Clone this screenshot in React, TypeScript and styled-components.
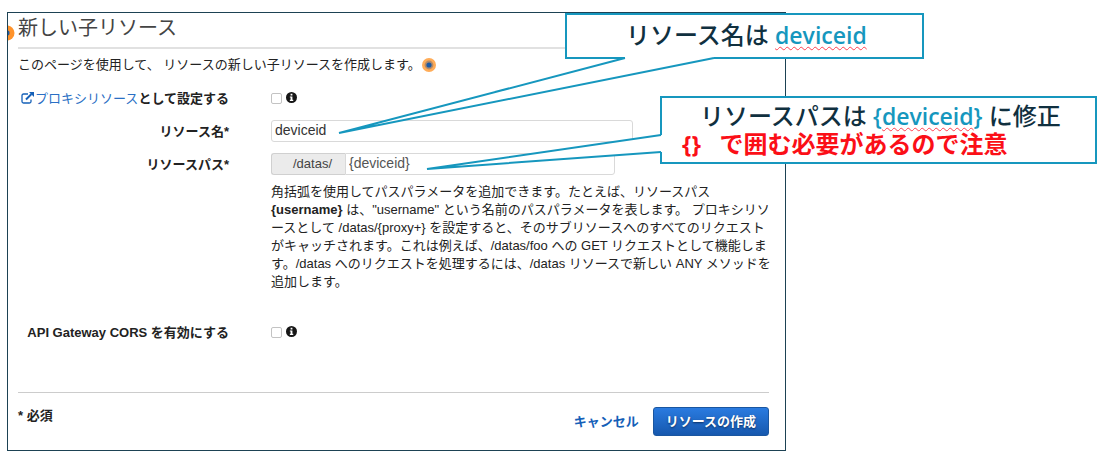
import React from "react";
import styled, { createGlobalStyle } from "styled-components";

const ink = "#222222";
const navy = "#1d4254";
const teal = "#1697be";
const linkBlue = "#1560b8";

const GlobalStyle = createGlobalStyle`
  *, *::before, *::after { box-sizing: border-box; }
  body {
    margin: 0;
    background: #ffffff;
    color: ${ink};
    font: 13px/18px "Liberation Sans", "Noto Sans CJK JP", sans-serif;
  }
`;

const Page = styled.main`
  padding: 12px 8px 12px 7px;
`;

const Stage = styled.div`
  position: relative;
  max-width: 779px;
`;

const Panel = styled.form`
  position: relative;
  overflow: hidden;
  padding: 0 16px 14px 10px;
  border: 1px solid ${navy};
  background: #ffffff;
`;

const Title = styled.h1`
  margin: 0;
  padding: 1px 0 5px;
  border-bottom: 2px solid #e1e1e1;
  font-size: 20px;
  line-height: 28px;
  font-weight: 400;
  color: #444444;
`;

const Lead = styled.p`
  display: flex;
  align-items: center;
  margin: 6px 0 12px;
  line-height: 20px;
`;

const Marker = styled.svg`
  width: 16px;
  height: 16px;
  flex: none;
`;

const EdgeMarker = styled(Marker)`
  position: absolute;
  left: -9px;
  top: 12px;
`;

const Row = styled.div<{ $space?: number }>`
  display: grid;
  grid-template-columns: 211px minmax(0, 1fr);
  column-gap: 42px;
  align-items: center;
  min-height: 22px;
  margin-top: ${(p) => p.$space ?? 0}px;
`;

const Label = styled.label`
  padding-top: 2px;
  text-align: right;
  font-weight: 700;
  white-space: nowrap;
`;

const ProxyLink = styled.a`
  color: #2a6fc4;
  font-weight: 400;
  text-decoration: none;
`;

const LinkIcon = styled.svg`
  width: 14px;
  height: 12px;
  vertical-align: -1px;
`;

const CheckGroup = styled.div`
  display: flex;
  align-items: center;
  gap: 4px;
`;

const Checkbox = styled.input`
  appearance: none;
  width: 11px;
  height: 11px;
  margin: 0;
  border: 1px solid #c3c3c3;
  border-radius: 2px;
  background: #ffffff;
`;

const InfoIcon = styled.svg`
  width: 11px;
  height: 11px;
  margin-bottom: 2px;
`;

const TextInput = styled.input`
  width: 100%;
  max-width: 362px;
  height: 22px;
  padding: 0 3px 2px;
  border: 1px solid #d9d9d9;
  border-radius: 3px;
  background: #ffffff;
  color: #333333;
  font: 14px/20px "Liberation Sans", sans-serif;
`;

const PathGroup = styled.div`
  display: flex;
  max-width: 344px;
`;

const Prefix = styled.span`
  flex: none;
  width: 74px;
  padding-right: 13px;
  border: 1px solid #d0d0d0;
  border-right: 0;
  border-radius: 3px 0 0 3px;
  background: #ebebeb;
  color: #444444;
  line-height: 20px;
  text-align: right;
`;

const PathInput = styled(TextInput)`
  flex: 1;
  min-width: 0;
  border-radius: 0 3px 3px 0;
  color: #555555;
`;

const Help = styled.p`
  margin: 8px 0 0 253px;
  white-space: nowrap;
`;

const Footer = styled.footer`
  display: flex;
  align-items: flex-start;
  margin-top: 49px;
  padding-top: 14px;
  border-top: 1px solid #cccccc;
`;

const Required = styled.strong`
  margin-right: auto;
`;

const Cancel = styled.button`
  height: 29px;
  margin-right: 14px;
  padding: 0;
  border: 0;
  background: none;
  color: ${linkBlue};
  font: 700 13px/27px "Liberation Sans", "Noto Sans CJK JP", sans-serif;
`;

const Submit = styled.button`
  height: 29px;
  padding: 0 12px;
  border: 1px solid #1a56a0;
  border-radius: 3px;
  background: linear-gradient(#2a7be0, #1658ae);
  color: #ffffff;
  font: 700 13px/27px "Liberation Sans", "Noto Sans CJK JP", sans-serif;
  text-shadow: 0 1px 2px #0b2f62;
`;

const Callout = styled.aside<{ $x: number; $y: number; $w: number; $h: number }>`
  position: absolute;
  left: ${(p) => p.$x}px;
  top: ${(p) => p.$y}px;
  width: ${(p) => p.$w}px;
  height: ${(p) => p.$h}px;
  border: 2px solid ${teal};
  background: #ffffff;
  color: #10303f;
  font: 500 24px/28px "Open Sans", "Noto Sans CJK JP", sans-serif;
  white-space: pre;
`;

const NoteLine = styled.p<{ $indent: number; $warn?: boolean }>`
  margin: 0;
  padding-left: ${(p) => p.$indent}px;
  color: ${(p) => (p.$warn ? "#fb0f17" : "inherit")};
  font-weight: ${(p) => (p.$warn ? 700 : 500)};
`;

const NameNote = styled(NoteLine)`
  padding-top: 6px;
`;

const PathNote = styled(NoteLine)`
  padding-top: 4px;
`;

const Term = styled.span`
  color: ${teal};
  font-size: 23px;
  font-weight: 600;
`;

const Misspelt = styled.span`
  text-decoration: underline wavy #ff4050 1px;
  text-decoration-skip-ink: none;
  text-underline-offset: 2px;
`;

const Tail = styled.svg`
  position: absolute;
  left: 0;
  top: 0;
  width: 779px;
  height: 439px;
  pointer-events: none;
`;

const Dot = () => (
  <>
    <circle cx="8" cy="8" r="7" fill="#ffac58" />
    <circle cx="8" cy="8" r="4.4" fill="#b58b68" />
    <circle cx="8" cy="8" r="2.6" fill="#1c5aa5" />
  </>
);

const Info = () => (
  <InfoIcon viewBox="0 0 12 12" aria-hidden="true">
    <circle cx="6" cy="6" r="6" fill="#161616" />
    <path d="M5 2h2v1.8H5zM4.2 4.8H7v3.7h.9v1.3H4.2V8.5H5V6.1h-.8z" fill="#fff" />
  </InfoIcon>
);

export default function App() {
  return (
    <>
      <GlobalStyle />
      <Page>
        <Stage>
          <Panel onSubmit={(e: React.FormEvent) => e.preventDefault()}>
            <EdgeMarker viewBox="0 0 16 16" aria-hidden="true">
              <circle cx="8" cy="8" r="7.5" fill="#ff932b" />
              <circle cx="8" cy="8" r="2.6" fill="#1c5aa5" />
            </EdgeMarker>
            <Title>新しい子リソース</Title>
            <Lead>
              このページを使用して、 リソースの新しい子リソースを作成します。
              <Marker viewBox="0 0 16 16" aria-hidden="true">
                <Dot />
              </Marker>
            </Lead>

            <Row>
              <Label htmlFor="proxy">
                <ProxyLink href="#proxy">
                  <LinkIcon viewBox="0 0 14 12" fill="none" stroke="#1560b8" aria-hidden="true">
                    <path d="M7 2H2.5A1.5 1.5 0 0 0 1 3.5v6A1.5 1.5 0 0 0 2.5 11h6A1.5 1.5 0 0 0 10 9.500V7.500" strokeWidth="1.3" />
                    <path d="M5 7.500 10.500 2" strokeWidth="2" />
                    <path d="M8 0h5v5z" fill="#1560b8" stroke="none" />
                  </LinkIcon>
                  プロキシリソース
                </ProxyLink>
                として設定する
              </Label>
              <CheckGroup>
                <Checkbox type="checkbox" id="proxy" />
                <Info />
              </CheckGroup>
            </Row>
            <Row $space={11}>
              <Label htmlFor="name">リソース名*</Label>
              <TextInput id="name" defaultValue="deviceid" />
            </Row>
            <Row $space={11}>
              <Label htmlFor="path">リソースパス*</Label>
              <PathGroup>
                <Prefix>/datas/</Prefix>
                <PathInput id="path" defaultValue="{deviceid}" />
              </PathGroup>
            </Row>
            <Help>
              角括弧を使用してパスパラメータを追加できます。たとえば、リソースパス
              <br />
              <b>{"{username}"}</b> は、"username" という名前のパスパラメータを表します。 プロキシリソ
              <br />
              ースとして /datas/{"{proxy+}"} を設定すると、そのサブリソースへのすべてのリクエスト
              <br />
              がキャッチされます。これは例えば、/datas/foo への GET リクエストとして機能しま
              <br />
              す。/datas へのリクエストを処理するには、/datas リソースで新しい ANY メソッドを
              <br />
              追加します。
            </Help>
            <Row $space={30}>
              <Label htmlFor="cors">API Gateway CORS を有効にする</Label>
              <CheckGroup>
                <Checkbox type="checkbox" id="cors" />
                <Info />
              </CheckGroup>
            </Row>

            <Footer>
              <Required>* 必須</Required>
              <Cancel type="button">キャンセル</Cancel>
              <Submit type="submit">リソースの作成</Submit>
            </Footer>
          </Panel>

          <Callout $x={558} $y={1} $w={359} $h={46}>
            <NameNote $indent={59}>
              リソース名は{" "}
              <Term>
                <Misspelt>deviceid</Misspelt>
              </Term>
            </NameNote>
          </Callout>
          <Callout $x={653} $y={84} $w={437} $h={68}>
            <PathNote $indent={38}>
              リソースパスは{" "}
              <Term>
                {"{"}
                <Misspelt>deviceid</Misspelt>
                {"}"}
              </Term>{" "}
              に修正
            </PathNote>
            <NoteLine $indent={20} $warn>
              {"{}   で囲む必要があるので注意"}
            </NoteLine>
          </Callout>
          <Tail viewBox="0 0 779 439" fill="#fff" stroke={teal} strokeWidth="2" aria-hidden="true">
            <path d="M618 44V46L332 121 707 46V44" stroke="none" />
            <path d="M618 46 332 121 707 46" />
            <path d="M656 123H654L420 157 654 140H656" stroke="none" />
            <path d="M654 123 420 157 654 140" />
          </Tail>
        </Stage>
      </Page>
    </>
  );
}
